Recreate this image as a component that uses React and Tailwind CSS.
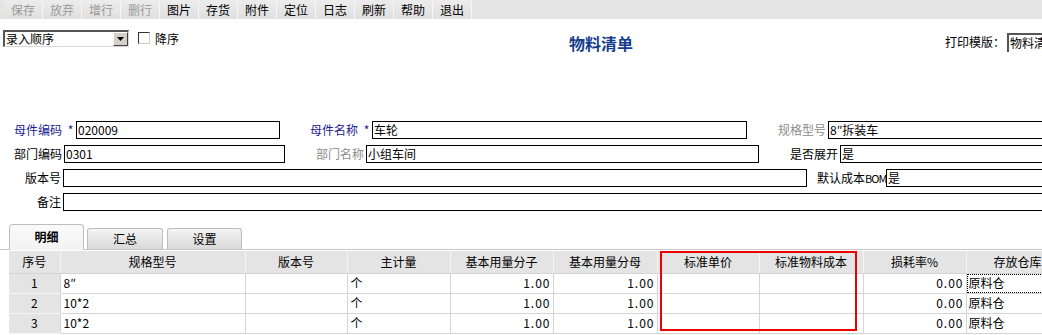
const FONT = { fontFamily: '"Noto Sans CJK SC", "Noto Sans", sans-serif' };

// 工具栏按钮：前四个为禁用状态
const toolButtons = [
  { label: "保存", disabled: true },
  { label: "放弃", disabled: true },
  { label: "增行", disabled: true },
  { label: "删行", disabled: true },
  { label: "图片" },
  { label: "存货" },
  { label: "附件" },
  { label: "定位" },
  { label: "日志" },
  { label: "刷新" },
  { label: "帮助" },
  { label: "退出" },
];

const columns = [
  { title: "序号", width: 51 },
  { title: "规格型号", width: 185 },
  { title: "版本号", width: 102 },
  { title: "主计量", width: 103 },
  { title: "基本用量分子", width: 103 },
  { title: "基本用量分母", width: 104 },
  { title: "标准单价", width: 102 },
  { title: "标准物料成本", width: 104 },
  { title: "损耗率%", width: 103 },
  { title: "存放仓库", width: 103 },
];

const rows = [
  { no: 1, spec: "8″", unit: "个", num: "1.00", den: "1.00", loss: "0.00", wh: "原料仓" },
  { no: 2, spec: "10*2", unit: "个", num: "1.00", den: "1.00", loss: "0.00", wh: "原料仓" },
  { no: 3, spec: "10*2", unit: "个", num: "1.00", den: "1.00", loss: "0.00", wh: "原料仓" },
];

const Field = ({ className = "", value = "" }) => (
  <div
    className={`h-[18px] border border-black bg-white pl-[1px] leading-[16px] whitespace-nowrap overflow-hidden shrink-0 ${className}`}
  >
    {value}
  </div>
);

const Label = ({ className = "", children }) => (
  <span className={`shrink-0 whitespace-nowrap ${className}`}>{children}</span>
);

const App = () => {
  return (
    <div
      className="w-[1042px] h-[335px] overflow-hidden bg-white text-[12px] text-black"
      style={FONT}
    >
      {/* 工具栏 */}
      <div className="h-[19px] bg-[#e4e4e4] flex pl-[4px]">
        {toolButtons.map((b) => (
          <div
            key={b.label}
            className={`w-[39px] h-[19px] shrink-0 flex items-center justify-center leading-none border-r border-[#f7f7f7] rounded-tr-[3px] bg-gradient-to-b from-[#ececec] to-[#e0e0e0] ${
              b.disabled ? "text-[#9a9a9a]" : "text-black"
            }`}
          >
            {b.label}
          </div>
        ))}
      </div>

      {/* 排序 + 标题 + 打印模版 */}
      <div className="flex items-start mt-[11px] h-[24px] whitespace-nowrap">
        <div className="ml-[3px] w-[126px] h-[17px] shrink-0 flex border-t-2 border-l-2 border-[#555] border-b border-r border-b-[#d8d8d8] border-r-[#d8d8d8] bg-white">
          <div className="flex-1 leading-[14px] pl-[1px]">录入顺序</div>
          <div className="w-[15px] h-[14px] bg-[#d4d0c8] border border-t-white border-l-white border-b-[#404040] border-r-[#404040] flex items-center justify-center">
            <svg width="7" height="4" viewBox="0 0 7 4">
              <path d="M0 0h7L3.5 4z" fill="#000" />
            </svg>
          </div>
        </div>
        <div className="ml-[9px] mt-[2px] w-[12px] h-[12px] shrink-0 border border-[#333] border-b-[#ccc] border-r-[#ccc] bg-white" />
        <Label className="ml-[5px] leading-[17px]">降序</Label>
        <Label className="ml-[390px] mt-[3px] text-[16px] font-bold text-[#143c8c] leading-[20px]">
          物料清单
        </Label>
        <Label className="ml-[312px] mt-[4px] leading-[16px]">打印模版：</Label>
        <div className="ml-[2px] mt-[3px] w-[60px] h-[19px] shrink-0 border-t-2 border-l-2 border-[#555] leading-[15px] pl-[1px] overflow-hidden">
          物料清单
        </div>
      </div>

      {/* 表头字段 */}
      <div className="mt-[67px] flex flex-col gap-[6px] whitespace-nowrap">
        <div className="flex items-center h-[18px] pl-[14px]">
          <Label className="w-[48px] text-[#1b1b8f]">母件编码</Label>
          <Label className="ml-[3px] w-[11px] text-center text-[#1b1b8f]">*</Label>
          <Field className="w-[204px]" value="020009" />
          <Label className="ml-[30px] w-[48px] text-[#1b1b8f]">母件名称</Label>
          <Label className="ml-[3px] w-[11px] text-center text-[#1b1b8f]">*</Label>
          <Field className="w-[375px]" value="车轮" />
          <Label className="ml-[31px] w-[48px] text-[#8c8c8c]">规格型号</Label>
          <Field className="ml-[2px] w-[260px]" value="8″拆装车" />
        </div>
        <div className="flex items-center h-[18px] pl-[14px]">
          <Label className="w-[48px]">部门编码</Label>
          <Field className="ml-[2px] w-[221px]" value="0301" />
          <Label className="ml-[31px] w-[48px] text-[#8c8c8c]">部门名称</Label>
          <Field className="ml-[2px] w-[393px]" value="小组车间" />
          <Label className="ml-[31px] w-[48px]">是否展开</Label>
          <Field className="ml-[2px] w-[260px]" value="是" />
        </div>
        <div className="flex items-center h-[18px]">
          <Label className="w-[61px] text-right">版本号</Label>
          <Field className="ml-[2px] w-[744px]" />
          <Label className="ml-[10px] w-[68px]">
            默认成本<span className="text-[11px] tracking-[-1px]">BOM</span>
          </Label>
          <Field className="ml-[1px] w-[260px]" value="是" />
        </div>
        <div className="flex items-center h-[18px]">
          <Label className="w-[61px] text-right">备注</Label>
          <Field className="ml-[2px] w-[990px]" />
        </div>
      </div>

      {/* 页签 */}
      <div className="mt-[13px] h-[26px] flex items-end pl-[9px] border-b border-[#c8c8c8]">
        <div className="w-[75px] h-[26px] shrink-0 -mb-[1px] rounded-t-[4px] border border-b-0 border-[#bdbdbd] bg-gradient-to-b from-[#fafafa] to-[#f2f2f2] flex items-center justify-center font-bold leading-none pb-[2px]">
          明细
        </div>
        <div className="ml-[3px] w-[76px] h-[21px] shrink-0 rounded-t-[3px] border border-b-0 border-[#bdbdbd] bg-gradient-to-b from-[#f4f4f4] to-[#d9d9d9] flex items-center justify-center leading-none">
          汇总
        </div>
        <div className="ml-[4px] w-[75px] h-[21px] shrink-0 rounded-t-[3px] border border-b-0 border-[#bdbdbd] bg-gradient-to-b from-[#f4f4f4] to-[#d9d9d9] flex items-center justify-center leading-none">
          设置
        </div>
      </div>

      {/* 明细表格 */}
      <div className="relative ml-[9px] mt-[1px]">
        <table className="table-fixed border-collapse w-[1060px]">
          <colgroup>
            {columns.map((c) => (
              <col key={c.title} style={{ width: c.width }} />
            ))}
          </colgroup>
          <thead>
            <tr className="h-[22px] bg-[#e4e4e4]">
              {columns.map((c) => (
                <th
                  key={c.title}
                  className="font-normal text-center border-r border-b border-[#f4f4f4] border-b-[#d4d4d4] leading-none whitespace-nowrap"
                >
                  {c.title}
                </th>
              ))}
            </tr>
          </thead>
          <tbody>
            {rows.map((r, i) => (
              <tr key={r.no} className="h-[20px]">
                <td className="bg-[#e4e4e4] text-center border-r border-b border-[#d4d4d4] border-b-[#f4f4f4]">
                  {r.no}
                </td>
                <td className="pl-[3px] border-r border-b border-[#d4d4d4]">{r.spec}</td>
                <td className="border-r border-b border-[#d4d4d4]" />
                <td className="pl-[3px] border-r border-b border-[#d4d4d4]">{r.unit}</td>
                <td className="text-right pr-[2px] border-r border-b border-[#d4d4d4] tracking-[1px]">
                  {r.num}
                </td>
                <td className="text-right pr-[2px] border-r border-b border-[#d4d4d4] tracking-[1px]">
                  {r.den}
                </td>
                <td className="border-r border-b border-[#d4d4d4]" />
                <td className="border-r border-b border-[#d4d4d4]" />
                <td className="text-right pr-[2px] border-r border-b border-[#d4d4d4] tracking-[1px]">
                  {r.loss}
                </td>
                <td className="border-r border-b border-[#d4d4d4] p-0">
                  <div
                    className={`h-[19px] pl-[2px] leading-[18px] ${
                      i === 0 ? "outline outline-1 outline-dotted outline-black -outline-offset-1" : ""
                    }`}
                  >
                    {r.wh}
                  </div>
                </td>
              </tr>
            ))}
          </tbody>
        </table>
        {/* 红色标注框 */}
        <div className="absolute left-[651px] top-0 w-[197px] h-[80px] border-2 border-[#ee0000] pointer-events-none" />
      </div>
    </div>
  );
};

export default App;
